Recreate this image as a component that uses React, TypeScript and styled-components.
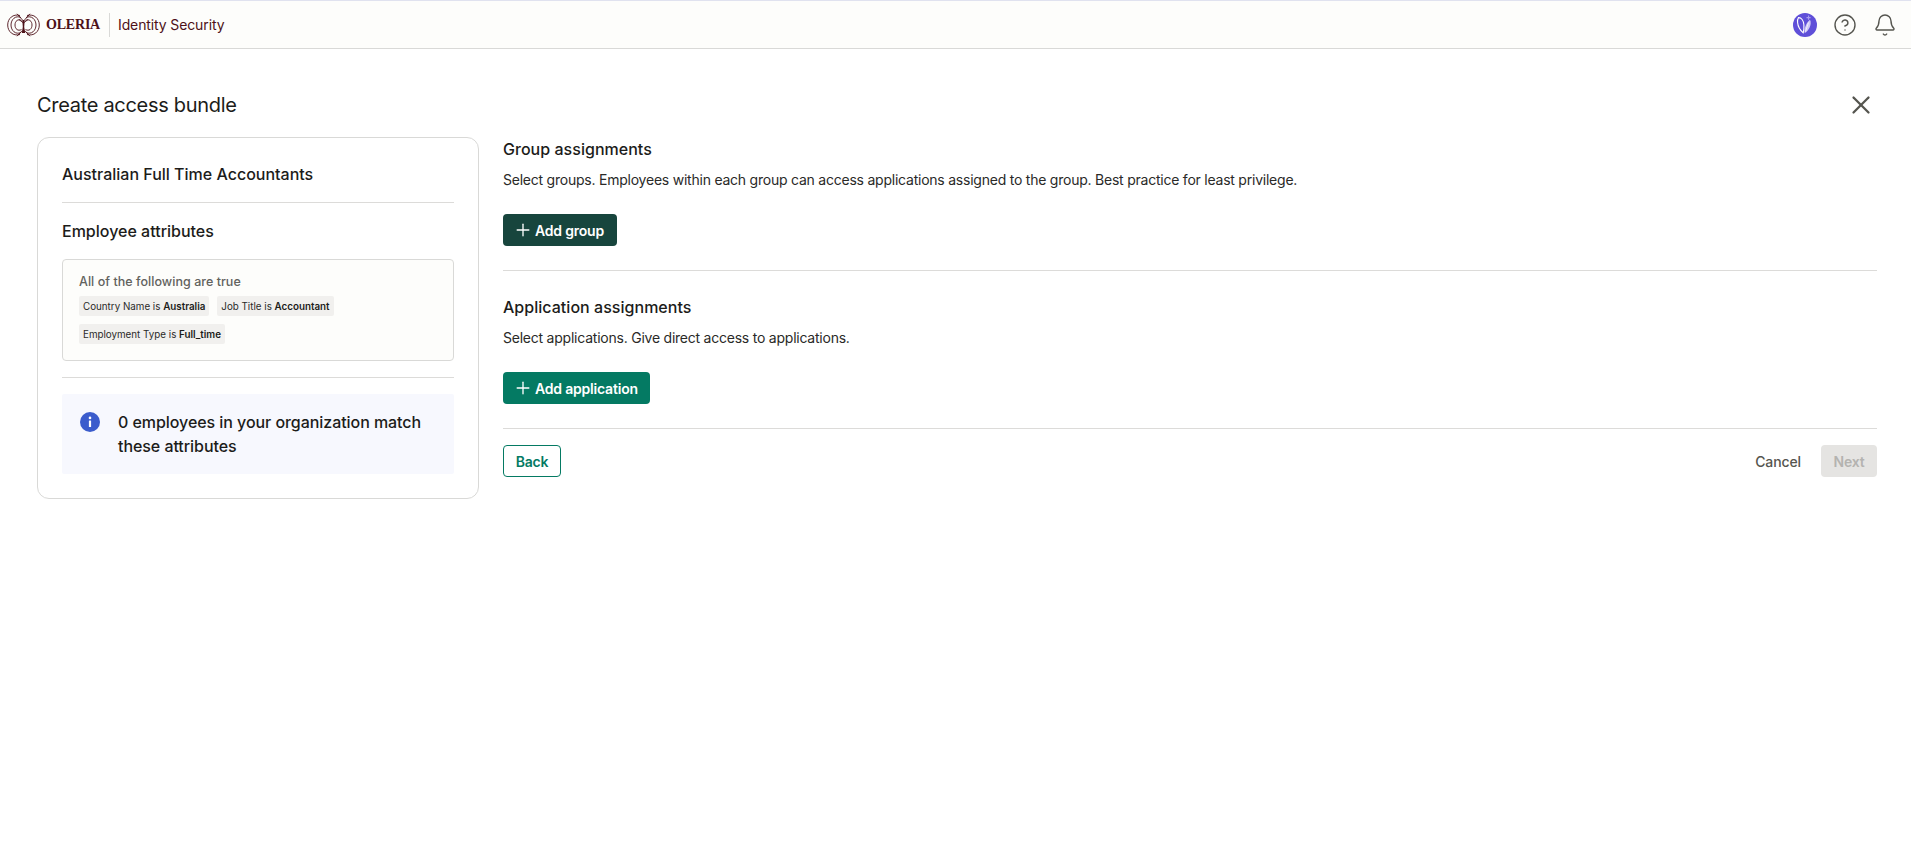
import React from 'react';
import styled, { createGlobalStyle } from 'styled-components';
import { Plus, X, CircleHelp, Bell } from 'lucide-react';

const GlobalStyle = createGlobalStyle`
  html, body {
    margin: 0;
    padding: 0;
    background: #fff;
    font-family: Inter, "Noto Sans", sans-serif;
    color: #1c1c1a;
  }
  * { box-sizing: border-box; }
`;

const Page = styled.div`
  width: 100%;
  min-height: 868px;
  background: #fff;
`;

const Header = styled.header`
  height: 49px;
  display: flex;
  align-items: center;
  justify-content: space-between;
  padding: 1px 14px 0 7px;
  background: #fdfdfb;
  border-top: 1px solid #e0e2ef;
  border-bottom: 1px solid #d9d9d7;
`;

const Brand = styled.div`
  display: flex;
  align-items: center;
  color: #4d1118;
`;

const Wordmark = styled.span`
  width: 54px;
  margin-left: 6px;
  font-family: "Liberation Serif", serif;
  font-size: 14px;
  font-weight: 700;
  letter-spacing: -0.2px;
`;

const BrandDivider = styled.span`
  width: 1px;
  height: 24px;
  margin: 0 8px 0 9px;
  background: #d9d9d7;
`;

const Product = styled.span`
  margin-bottom: 1px;
  font-size: 14px;
  letter-spacing: -0.12px;
`;

const HeaderIcons = styled.div`
  display: flex;
  align-items: center;
  gap: 16px;
  color: #55554f;
`;

const Main = styled.main`
  padding: 40px 34px 0 37px;
`;

const TitleRow = styled.div`
  display: flex;
  align-items: center;
  justify-content: space-between;
  height: 32px;
  margin-bottom: 16px;
`;

const Title = styled.h1`
  margin: 0;
  font-size: 20px;
  font-weight: 400;
  letter-spacing: -0.3px;
`;

const CloseButton = styled.button`
  display: flex;
  padding: 0;
  margin-right: 1px;
  border: 0;
  background: none;
  color: #55554f;
`;

const Columns = styled.div`
  display: grid;
  grid-template-columns: 442px 1fr;
  gap: 24px;
  align-items: start;
`;

const Card = styled.section`
  height: 362px;
  padding: 24px 24px 0;
  border: 1px solid #d9d9d7;
  border-radius: 12px;
`;

const CardName = styled.h2`
  margin: 0;
  font-size: 16px;
  line-height: 24px;
  font-weight: 500;
  letter-spacing: 0;
`;

const CardRule = styled.hr`
  margin: 16px 0;
  border: 0;
  border-top: 1px solid #dcdbd9;
`;

const AttributeBox = styled.div`
  margin-top: 16px;
  height: 102px;
  padding: 14px 16px;
  background: #fdfdfb;
  border: 1px solid #d9d9d7;
  border-radius: 4px;
`;

const AttributeLead = styled.div`
  font-size: 12.5px;
  line-height: 16px;
  font-weight: 500;
  letter-spacing: 0.04px;
  color: #62625e;
`;

const Chips = styled.div`
  display: flex;
  flex-wrap: wrap;
  gap: 8px;
  margin-top: 6px;
`;

const Chip = styled.span`
  height: 20px;
  padding: 0 4px;
  display: inline-flex;
  align-items: center;
  white-space: pre;
  font-size: 9.8px;
  color: #2a2a28;
  background: #f1f0ee;
  border-radius: 2px;

  b {
    font-weight: 600;
    color: #1c1c1a;
  }
`;

const InfoBox = styled.div`
  height: 80px;
  display: flex;
  gap: 18px;
  padding: 16px 18px;
  background: #f7f8fe;
  border-radius: 2px;
`;

const InfoIcon = styled.svg`
  flex: none;
  margin-top: 2px;
`;

const InfoText = styled.p`
  margin: 0;
  font-size: 16px;
  line-height: 24px;
  font-weight: 500;
  letter-spacing: -0.06px;
`;

const Assignments = styled.div`
  min-width: 0;
`;

const AssignmentSection = styled.section`
  padding-bottom: 24px;
  border-bottom: 1px solid #dcdbd9;

  & + & {
    margin-top: 24px;
  }
`;

const SectionTitle = styled.h3`
  margin: 0 0 8px;
  font-size: 16px;
  line-height: 24px;
  font-weight: 500;
  letter-spacing: 0.03px;
`;

const SectionText = styled.p`
  margin: 0 0 23px;
  font-size: 14px;
  line-height: 22px;
  letter-spacing: -0.23px;
  color: #2a2a28;
`;

const AddButton = styled.button<{ $dark?: boolean }>`
  height: 32px;
  display: inline-flex;
  align-items: center;
  gap: 2px;
  padding: 0 12.5px 0 10px;
  border: 0;
  border-radius: 4px;
  font: 600 14px Inter, sans-serif;
  letter-spacing: -0.2px;
  color: #fff;
  background: ${p => (p.$dark ? '#17453d' : '#047a63')};
`;

const FooterRow = styled.div`
  display: flex;
  align-items: center;
  justify-content: space-between;
  margin-top: 16px;
`;

const BackButton = styled.button`
  width: 58px;
  height: 32px;
  padding: 0;
  background: #fff;
  border: 1px solid #047a63;
  border-radius: 4px;
  font: 600 14px Inter, sans-serif;
  letter-spacing: -0.2px;
  color: #047a63;
`;

const FooterActions = styled.div`
  display: flex;
  align-items: center;
  gap: 20px;
`;

const CancelButton = styled.button`
  padding: 0;
  border: 0;
  background: none;
  font: 500 14px Inter, sans-serif;
  letter-spacing: -0.1px;
  color: #55554f;
`;

const NextButton = styled.button`
  width: 56px;
  height: 32px;
  padding: 0;
  border: 0;
  border-radius: 4px;
  background: #e5e4e2;
  font: 600 14px Inter, sans-serif;
  letter-spacing: -0.2px;
  color: #b4b3b0;
`;

const OleriaLogo = () => (
  <svg width="33" height="24" viewBox="0 0 33 24" fill="none" stroke="#4d1118" strokeWidth="0.9">
    <path d="M13 2.5C6 .5 .7 5.5 .7 12S6 23.5 13 21.5" />
    <path d="M20 2.5C27 .5 32.3 5.5 32.3 12S27 23.5 20 21.5" />
    <path d="M14 4.5C8.5 2 4 6.500 4 12s4.500 10 10 7.5" />
    <path d="M19 4.5C24.5 2 29 6.500 29 12s-4.500 10-10 7.5" />
    <path d="M14.5 7.5C11 5.500 8 8 8 12s3 6.500 6.5 4.500" />
    <path d="M18.5 7.5C22 5.500 25 8 25 12s-3 6.500-6.5 4.500" />
    <path d="M10 .8 15.500 7M23 .8 17.500 7M10 23.200 15.300 17.500M23 23.200 17.700 17.500" />
    <path d="M12 6.500 16.500 10 21 6.500" />
    <path d="M15.300 7h2.400l-.5 7 1 6h-3.400l1-6z" fill="#4d1118" stroke="none" />
  </svg>
);

const AssistantBadge = () => (
  <svg width="24" height="24" viewBox="0 0 24 24">
    <circle cx="12" cy="12" r="12" fill="#5f4fd8" />
    <path d="M5.500 4.600c2.800-.2 5 3 5.400 7.200.2 2.900-.1 5.800-.7 8C7.700 17.600 5 13.800 4.600 9.600c-.2-2 .1-3.900.9-5z" fill="none" stroke="#fff" strokeWidth="1.100" />
    <path d="M17 6.800c1.200 2.200.9 5.400-.6 8.300-1.100 2.200-2.900 4.100-4.700 5-.6-2.300-.1-5.200 1.200-7.800 1.100-2.300 2.600-4.300 4.100-5.500z" fill="#cfc8f6" />
    <path d="M15.500 9.500 12.500 18.500" stroke="#fff" strokeWidth="0.700" fill="none" />
    <path d="M15 2.600h1.100v1.500h1.500v1.100h-1.500v1.500H15V5.200h-1.500V4.100H15z" fill="#a79cf0" />
  </svg>
);

const InfoGlyph = () => (
  <InfoIcon width="20" height="20" viewBox="0 0 20 20">
    <circle cx="10" cy="10" r="10" fill="#3b5ccc" />
    <circle cx="10" cy="5.900" r="1.300" fill="#fff" />
    <rect x="8.900" y="8.500" width="2.200" height="6.500" rx="0.500" fill="#fff" />
  </InfoIcon>
);

const chips = [
  { label: 'Country Name', value: 'Australia' },
  { label: 'Job Title', value: 'Accountant' },
  { label: 'Employment Type', value: 'Full_time' },
];

const App = () => (
  <Page>
    <GlobalStyle />
    <Header>
      <Brand>
        <OleriaLogo />
        <Wordmark>OLERIA</Wordmark>
        <BrandDivider />
        <Product>Identity Security</Product>
      </Brand>
      <HeaderIcons>
        <AssistantBadge />
        <CircleHelp size={24} strokeWidth={1.4} />
        <Bell size={24} strokeWidth={1.4} />
      </HeaderIcons>
    </Header>
    <Main>
      <TitleRow>
        <Title>Create access bundle</Title>
        <CloseButton>
          <X size={30} strokeWidth={1.8} />
        </CloseButton>
      </TitleRow>
      <Columns>
        <Card>
          <CardName>Australian Full Time Accountants</CardName>
          <CardRule />
          <CardName>Employee attributes</CardName>
          <AttributeBox>
            <AttributeLead>All of the following are true</AttributeLead>
            <Chips>
              {chips.map(chip => (
                <Chip key={chip.label}>
                  {chip.label} is <b>{chip.value}</b>
                </Chip>
              ))}
            </Chips>
          </AttributeBox>
          <CardRule />
          <InfoBox>
            <InfoGlyph />
            <InfoText>0 employees in your organization match these attributes</InfoText>
          </InfoBox>
        </Card>
        <Assignments>
          <AssignmentSection>
            <SectionTitle>Group assignments</SectionTitle>
            <SectionText>
              Select groups. Employees within each group can access applications assigned to the group. Best practice for least privilege.
            </SectionText>
            <AddButton $dark>
              <Plus size={20} strokeWidth={1.6} />
              Add group
            </AddButton>
          </AssignmentSection>
          <AssignmentSection>
            <SectionTitle>Application assignments</SectionTitle>
            <SectionText>Select applications. Give direct access to applications.</SectionText>
            <AddButton>
              <Plus size={20} strokeWidth={1.6} />
              Add application
            </AddButton>
          </AssignmentSection>
          <FooterRow>
            <BackButton>Back</BackButton>
            <FooterActions>
              <CancelButton>Cancel</CancelButton>
              <NextButton>Next</NextButton>
            </FooterActions>
          </FooterRow>
        </Assignments>
      </Columns>
    </Main>
  </Page>
);

export default App;
